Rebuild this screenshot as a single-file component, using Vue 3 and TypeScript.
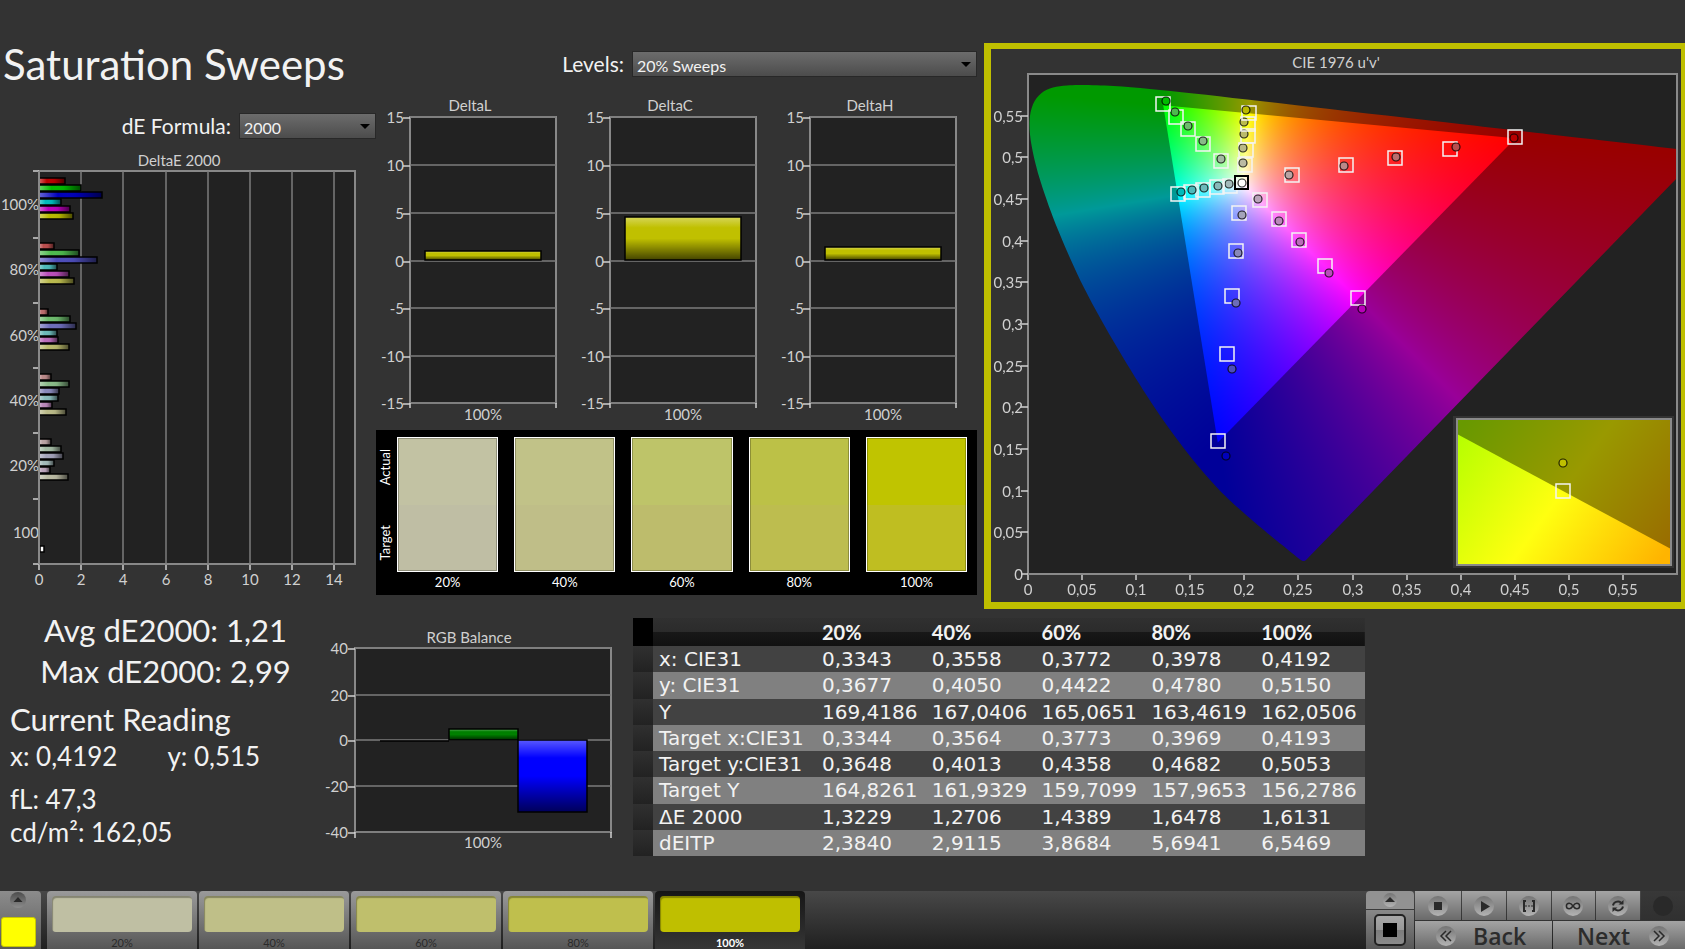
<script setup lang="ts">
import { onMounted, ref } from 'vue'

type Family = 'red' | 'green' | 'blue' | 'cyan' | 'magenta' | 'yellow'
type Point = [number, number]

const families: Family[] = ['red', 'green', 'blue', 'cyan', 'magenta', 'yellow']
const levels = ['20%', '40%', '60%', '80%', '100%']
const lowChannel = [163, 136, 108, 77, 0]

const channels: Record<Family, [number, number, number]> = {
  red: [1, 0, 0],
  green: [0, 1, 0],
  blue: [0, 0, 1],
  cyan: [0, 1, 1],
  magenta: [1, 0, 1],
  yellow: [1, 1, 0],
}

function tint(family: Family, level: number): string {
  const parts = channels[family].map((on) => (on ? 186 : lowChannel[level]))
  return `rgb(${parts.join(',')})`
}

/* DeltaE bars: right edge of each bar, per group, from 100% down to 20% */
const deGroups = [
  { label: '100%', level: 4, ends: [65, 81, 102, 61, 70, 73] },
  { label: '80%', level: 3, ends: [54, 79, 97, 57, 69, 74] },
  { label: '60%', level: 2, ends: [48, 70, 76, 57, 58, 69] },
  { label: '40%', level: 1, ends: [51, 69, 59, 58, 52, 66] },
  { label: '20%', level: 0, ends: [51, 61, 63, 54, 50, 68] },
]
const deTicksY = [171, 238, 303, 368, 433, 499, 564]
const deGrid = [0, 2, 4, 6, 8, 10, 12, 14].map((v) => ({ v, x: Math.round(39 + v * 21.1) }))

const deltaCharts = [
  { title: 'DeltaL', x: 410, barTop: 251 },
  { title: 'DeltaC', x: 610, barTop: 217 },
  { title: 'DeltaH', x: 810, barTop: 247 },
]
const deltaRows = [
  { v: 15, y: 117 },
  { v: 10, y: 165 },
  { v: 5, y: 213 },
  { v: 0, y: 261 },
  { v: -5, y: 308 },
  { v: -10, y: 356 },
  { v: -15, y: 403 },
]
const rgbRows = [
  { v: 40, y: 648 },
  { v: 20, y: 695 },
  { v: 0, y: 740 },
  { v: -20, y: 786 },
  { v: -40, y: 832 },
]

const swatches = [
  { label: '20%', actual: '#c2c2a3', target: '#bfbea4' },
  { label: '40%', actual: '#c1c288', target: '#bfbe88' },
  { label: '60%', actual: '#bec469', target: '#bdbc6c' },
  { label: '80%', actual: '#bcc147', target: '#bdbd4f' },
  { label: '100%', actual: '#c0c400', target: '#bfbe21' },
]
const tabs = [
  { label: '20%', color: '#bfbfa3' },
  { label: '40%', color: '#bfbf88' },
  { label: '60%', color: '#bfbf6c' },
  { label: '80%', color: '#bfbf4d' },
  { label: '100%', color: '#bfbf00' },
]
const activeTab = ref(4)
const formula = ref('2000')
const sweep = ref('20% Sweeps')

const rows: { name: string; values: string[] }[] = [
  { name: 'x: CIE31', values: ['0,3343', '0,3558', '0,3772', '0,3978', '0,4192'] },
  { name: 'y: CIE31', values: ['0,3677', '0,4050', '0,4422', '0,4780', '0,5150'] },
  { name: 'Y', values: ['169,4186', '167,0406', '165,0651', '163,4619', '162,0506'] },
  { name: 'Target x:CIE31', values: ['0,3344', '0,3564', '0,3773', '0,3969', '0,4193'] },
  { name: 'Target y:CIE31', values: ['0,3648', '0,4013', '0,4358', '0,4682', '0,5053'] },
  { name: 'Target Y', values: ['164,8261', '161,9329', '159,7099', '157,9653', '156,2786'] },
  { name: 'ΔE 2000', values: ['1,3229', '1,2706', '1,4389', '1,6478', '1,6131'] },
  { name: 'dEITP', values: ['2,3840', '2,9115', '3,8684', '5,6941', '6,5469'] },
]

/* Chromaticity diagram */
const plot = { x: 1028, y: 74, w: 649, h: 500 }
const unitX = plot.w / 0.6
const unitY = plot.h / 0.6
const axis = Array.from({ length: 12 }, (_, i) => {
  const v = i * 0.05
  return {
    label: String(Math.round(v * 100) / 100).replace('.', ','),
    x: Math.round(plot.x + v * unitX),
    y: Math.round(plot.y + plot.h - v * unitY),
  }
})

const targets: Record<Family, Point[]> = {
  red: [[1292, 175], [1346, 165], [1395, 158], [1450, 149], [1515, 137]],
  green: [[1221, 161], [1203, 144], [1188, 129], [1176, 117], [1163, 104]],
  blue: [[1239, 213], [1236, 251], [1232, 296], [1227, 354], [1218, 441]],
  cyan: [[1230, 186], [1217, 187], [1203, 190], [1191, 192], [1178, 194]],
  magenta: [[1260, 200], [1279, 219], [1299, 240], [1325, 266], [1358, 298]],
  yellow: [[1245, 165], [1246, 150], [1248, 136], [1248, 124], [1249, 113]],
}
const readings: Record<Family, Point[]> = {
  red: [[1289, 175], [1344, 166], [1396, 157], [1456, 147], [1514, 138]],
  green: [[1221, 159], [1203, 141], [1188, 126], [1175, 112], [1166, 101]],
  blue: [[1242, 215], [1238, 253], [1236, 303], [1232, 369], [1226, 456]],
  cyan: [[1229, 184], [1218, 186], [1204, 188], [1192, 190], [1181, 192]],
  magenta: [[1258, 199], [1279, 221], [1300, 242], [1329, 273], [1362, 309]],
  yellow: [[1243, 163], [1243, 148], [1244, 134], [1244, 122], [1246, 110]],
}

const locus: Point[] = [
  [0.1741, 0.005], [0.1714, 0.0051], [0.1644, 0.0109], [0.1566, 0.0177], [0.144, 0.0297],
  [0.1355, 0.0399], [0.1241, 0.0578], [0.1096, 0.0868], [0.0913, 0.1327], [0.0687, 0.2007],
  [0.0454, 0.295], [0.0235, 0.4127], [0.0082, 0.5384], [0.0039, 0.6548], [0.0139, 0.7502],
  [0.0389, 0.812], [0.0743, 0.8338], [0.1142, 0.8262], [0.1547, 0.8059], [0.2296, 0.7543],
  [0.3016, 0.6923], [0.3731, 0.6245], [0.4441, 0.5547], [0.5125, 0.4866], [0.5752, 0.4242],
  [0.627, 0.3725], [0.6658, 0.334], [0.6915, 0.3083], [0.719, 0.2809], [0.7347, 0.2653],
]
const primaries: Point[] = [[0.64, 0.33], [0.3, 0.6], [0.15, 0.06]]

function toPlot([x, y]: Point): Point {
  const d = -2 * x + 12 * y + 3
  return [((4 * x) / d) * unitX, plot.h - ((9 * y) / d) * unitY]
}

function colorAt(u: number, v: number): [number, number, number] {
  const d = 6 * u - 16 * v + 12
  const x = (9 * u) / d
  const y = Math.max((4 * v) / d, 0.0001)
  const X = x / y
  const Z = (1 - x - y) / y
  const lin = [
    3.2406 * X - 1.5372 - 0.4986 * Z,
    -0.9689 * X + 1.8758 + 0.0415 * Z,
    0.0557 * X - 0.204 + 1.057 * Z,
  ].map((c) => Math.max(c, 0))
  const top = Math.max(...lin, 0.0001)
  return lin.map((c) => (c / top) * 255) as [number, number, number]
}

function layer(scale: number): HTMLCanvasElement {
  const c = document.createElement('canvas')
  c.width = plot.w
  c.height = plot.h
  const ctx = c.getContext('2d')!
  const img = ctx.createImageData(plot.w, plot.h)
  for (let py = 0; py < plot.h; py++) {
    for (let px = 0; px < plot.w; px++) {
      const rgb = colorAt(px / unitX, (plot.h - py) / unitY)
      const i = (py * plot.w + px) * 4
      img.data[i] = rgb[0] * scale
      img.data[i + 1] = rgb[1] * scale
      img.data[i + 2] = rgb[2] * scale
      img.data[i + 3] = 255
    }
  }
  ctx.putImageData(img, 0, 0)
  return c
}

const diagram = ref<HTMLCanvasElement | null>(null)

onMounted(() => {
  const ctx = diagram.value?.getContext('2d')
  if (!ctx) return
  const pts = locus.map(toPlot)
  ctx.save()
  ctx.beginPath()
  ctx.moveTo(pts[0][0], pts[0][1])
  for (let i = 0; i < pts.length - 1; i++) {
    const p0 = pts[Math.max(i - 1, 0)]
    const p1 = pts[i]
    const p2 = pts[i + 1]
    const p3 = pts[Math.min(i + 2, pts.length - 1)]
    ctx.bezierCurveTo(
      p1[0] + (p2[0] - p0[0]) / 6, p1[1] + (p2[1] - p0[1]) / 6,
      p2[0] - (p3[0] - p1[0]) / 6, p2[1] - (p3[1] - p1[1]) / 6,
      p2[0], p2[1],
    )
  }
  ctx.closePath()
  ctx.clip()
  ctx.drawImage(layer(0.6), 0, 0)
  ctx.restore()
  ctx.save()
  ctx.beginPath()
  primaries.map(toPlot).forEach((p) => ctx.lineTo(p[0], p[1]))
  ctx.closePath()
  ctx.clip()
  ctx.drawImage(layer(1), 0, 0)
  ctx.restore()
})
</script>

<template>
  <div class="app">
    <main class="main">
      <section class="top">
        <div class="left">
          <h1>Saturation Sweeps</h1>
          <div class="field formula">
            <label for="formula">dE Formula:</label>
            <span class="picker">
              <select id="formula" v-model="formula">
                <option>2000</option>
              </select>
            </span>
          </div>
          <svg class="chart" viewBox="0 150 376 445" role="img" aria-label="DeltaE 2000">
            <defs>
              <linearGradient id="shadeH" x1="0" x2="1" y1="0" y2="0">
                <stop offset="0" stop-color="#fff" stop-opacity="0.4" />
                <stop offset="0.3" stop-color="#fff" stop-opacity="0" />
                <stop offset="0.6" stop-color="#000" stop-opacity="0.05" />
                <stop offset="1" stop-color="#000" stop-opacity="0.6" />
              </linearGradient>
            </defs>
            <text x="179" y="166" class="mid">DeltaE 2000</text>
            <rect x="39" y="171" width="316" height="393" class="plot" />
            <g v-for="g in deGrid" :key="g.v">
              <line :x1="g.x" :x2="g.x" y1="171" y2="564" class="grid" />
              <line :x1="g.x" :x2="g.x" y1="565" y2="570" class="tick" />
              <text :x="g.x" y="585" class="mid">{{ g.v }}</text>
            </g>
            <line v-for="y in deTicksY" :key="y" x1="33" x2="39" :y1="y" :y2="y" class="tick" />
            <g v-for="(g, gi) in deGroups" :key="g.label">
              <text x="39" :y="210 + Math.round(gi * 65.3)" class="end">{{ g.label }}</text>
              <g v-for="(e, i) in g.ends" :key="i">
                <rect x="39" :y="178 + Math.round(gi * 65.3) + i * 7" :width="e - 39" height="6"
                  :fill="tint(families[i], g.level)" />
                <rect x="39" :y="178 + Math.round(gi * 65.3) + i * 7" :width="e - 39" height="6"
                  fill="url(#shadeH)" class="outline" />
              </g>
            </g>
            <text x="39" y="538" class="end">100</text>
            <rect x="40" y="546" width="4" height="6" fill="#fff" class="outline" />
            <line x1="39" x2="39" y1="171" y2="564" class="frame" />
          </svg>
        </div>

        <div class="center">
          <div class="field levels">
            <label for="levels">Levels:</label>
            <span class="picker wide">
              <select id="levels" v-model="sweep">
                <option>20% Sweeps</option>
              </select>
            </span>
          </div>
          <svg class="chart" viewBox="376 90 608 340" role="img" aria-label="Delta L, C and H">
            <defs>
              <linearGradient id="shadeV" x1="0" x2="0" y1="0" y2="1">
                <stop offset="0" stop-color="#fff" stop-opacity="0.35" />
                <stop offset="0.25" stop-color="#fff" stop-opacity="0" />
                <stop offset="0.5" stop-color="#000" stop-opacity="0" />
                <stop offset="1" stop-color="#000" stop-opacity="0.65" />
              </linearGradient>
            </defs>
            <g v-for="c in deltaCharts" :key="c.title">
              <text :x="c.x + 60" y="111" class="mid">{{ c.title }}</text>
              <rect :x="c.x" y="117" width="146" height="286" class="plot" />
              <g v-for="r in deltaRows" :key="r.v">
                <line :x1="c.x" :x2="c.x + 146" :y1="r.y" :y2="r.y" class="grid" />
                <line :x1="c.x - 7" :x2="c.x" :y1="r.y + 1" :y2="r.y + 1" class="tick" />
                <text :x="c.x - 6" :y="r.y + 6" class="end">{{ r.v }}</text>
              </g>
              <line :x1="c.x" :x2="c.x" y1="403" y2="408" class="tick" />
              <line :x1="c.x + 146" :x2="c.x + 146" y1="403" y2="408" class="tick" />
              <rect :x="c.x + 15" :y="c.barTop" width="116" :height="260 - c.barTop" fill="#c0c000" />
              <rect :x="c.x + 15" :y="c.barTop" width="116" :height="260 - c.barTop"
                fill="url(#shadeV)" class="outline" />
              <text :x="c.x + 73" y="420" class="mid">100%</text>
            </g>
          </svg>
          <div class="compare">
            <div class="sides"><span>Actual</span><span>Target</span></div>
            <div v-for="s in swatches" :key="s.label" class="pair">
              <div class="tile">
                <div class="half" :style="{ background: s.actual }"></div>
                <div class="half" :style="{ background: s.target }"></div>
              </div>
              <span>{{ s.label }}</span>
            </div>
          </div>
        </div>

        <div class="cie">
          <svg class="chart" viewBox="991 49 690 553" role="img" aria-label="CIE 1976 chromaticity">
            <defs>
              <linearGradient id="bright" gradientUnits="userSpaceOnUse" x1="1466" y1="421" x2="1660" y2="561">
                <stop offset="0" stop-color="#b4ff00" />
                <stop offset="0.5" stop-color="#ffff10" />
                <stop offset="1" stop-color="#ffb400" />
              </linearGradient>
              <linearGradient id="dim" gradientUnits="userSpaceOnUse" x1="1466" y1="421" x2="1660" y2="561">
                <stop offset="0" stop-color="#689900" />
                <stop offset="0.5" stop-color="#999900" />
                <stop offset="1" stop-color="#996c00" />
              </linearGradient>
            </defs>
            <text x="1336" y="68" class="mid">CIE 1976 u'v'</text>
            <rect :x="plot.x" :y="plot.y" :width="plot.w" :height="plot.h" class="plot" />
            <foreignObject :x="plot.x" :y="plot.y" :width="plot.w" :height="plot.h">
              <canvas ref="diagram" :width="plot.w" :height="plot.h" class="diagram"></canvas>
            </foreignObject>
            <rect :x="plot.x" :y="plot.y" :width="plot.w" :height="plot.h" class="frame" />
            <g v-for="a in axis" :key="a.label">
              <line :x1="a.x" :x2="a.x" y1="575" y2="580" class="tick" />
              <text :x="a.x" y="595" class="mid">{{ a.label }}</text>
              <line x1="1021" x2="1028" :y1="a.y" :y2="a.y" class="tick" />
              <text x="1023" :y="a.y + 6" class="end">{{ a.label }}</text>
            </g>
            <g v-for="f in families" :key="f">
              <g v-for="(t, i) in targets[f]" :key="i">
                <rect :x="t[0] - 7" :y="t[1] - 7" width="14" height="14" class="target" />
                <circle :cx="readings[f][i][0]" :cy="readings[f][i][1]" r="4" :fill="tint(f, i)"
                  class="reading" />
              </g>
            </g>
            <rect x="1235" y="176" width="13" height="13" class="white-point" />
            <circle cx="1242" cy="183" r="4" fill="#fff" class="reading" />
            <rect x="1453" y="416" width="221" height="152" fill="#333" />
            <rect x="1457" y="419" width="214" height="146" fill="url(#dim)" />
            <polygon points="1457,434 1671,549 1671,565 1457,565" fill="url(#bright)" />
            <rect x="1457" y="419" width="214" height="146" class="frame" />
            <rect x="1556" y="484" width="14" height="14" class="target" />
            <circle cx="1563" cy="463" r="4" fill="#bfbf00" class="reading" />
          </svg>
        </div>
      </section>

      <section class="bottom">
        <div class="stats">
          <p class="big centered">Avg dE2000: 1,21</p>
          <p class="big centered">Max dE2000: 2,99</p>
          <h2 class="big">Current Reading</h2>
          <p class="xy"><span>x: 0,4192</span><span>y: 0,515</span></p>
          <p>fL: 47,3</p>
          <p>cd/m²: 162,05</p>
        </div>
        <svg class="chart balance" viewBox="325 625 308 235" role="img" aria-label="RGB Balance">
          <text x="469" y="643" class="mid">RGB Balance</text>
          <rect x="355" y="648" width="256" height="184" class="plot" />
          <g v-for="r in rgbRows" :key="r.v">
            <line x1="355" x2="611" :y1="r.y" :y2="r.y" class="grid" />
            <line x1="348" x2="355" :y1="r.y + 1" :y2="r.y + 1" class="tick" />
            <text x="348" :y="r.y + 6" class="end">{{ r.v }}</text>
          </g>
          <line x1="355" x2="355" y1="832" y2="838" class="tick" />
          <line x1="611" x2="611" y1="832" y2="838" class="tick" />
          <line x1="380" x2="449" y1="741" y2="741" class="outline" />
          <rect x="449" y="729" width="69" height="11" fill="#008000" />
          <rect x="449" y="729" width="69" height="11" fill="url(#shadeV)" class="outline" />
          <rect x="518" y="740" width="69" height="72" fill="#00f" />
          <rect x="518" y="740" width="69" height="72" fill="url(#shadeV)" class="outline" />
          <text x="483" y="848" class="mid">100%</text>
        </svg>
        <table>
          <colgroup>
            <col class="c-mark" />
            <col class="c-name" />
            <col v-for="l in levels" :key="l" />
          </colgroup>
          <thead>
            <tr>
              <td class="mark"></td>
              <td></td>
              <th v-for="l in levels" :key="l" scope="col">{{ l }}</th>
            </tr>
          </thead>
          <tbody>
            <tr v-for="r in rows" :key="r.name">
              <td class="mark"></td>
              <th scope="row">{{ r.name }}</th>
              <td v-for="(v, i) in r.values" :key="i">{{ v }}</td>
            </tr>
          </tbody>
        </table>
      </section>
    </main>

    <footer class="bar">
      <svg class="defs" width="0" height="0" aria-hidden="true">
        <defs>
          <linearGradient id="knob" x1="0" x2="0" y1="0" y2="1">
            <stop offset="0" stop-color="#747474" />
            <stop offset="1" stop-color="#b4b4b4" />
          </linearGradient>
          <linearGradient id="knobDark" x1="0" x2="0" y1="0" y2="1">
            <stop offset="0" stop-color="#4c4c4c" />
            <stop offset="1" stop-color="#8c8c8c" />
          </linearGradient>
        </defs>
      </svg>
      <button class="current" type="button" aria-label="Show current patch">
        <svg width="16" height="16" viewBox="0 0 16 16">
          <circle cx="8" cy="8" r="8" fill="url(#knobDark)" />
          <path d="M3.500 10 8 5 12.500 10z" class="ink" />
        </svg>
        <span class="chip"></span>
      </button>
      <nav class="tabs">
        <button v-for="(t, i) in tabs" :key="t.label" type="button" class="tab"
          :class="{ active: i === activeTab }" @click="activeTab = i">
          <span class="patch" :style="{ background: t.color }"></span>
          <span>{{ t.label }}</span>
        </button>
      </nav>
      <div class="stopper">
        <button type="button" class="up" aria-label="Expand">
          <svg width="16" height="16" viewBox="0 0 16 16">
            <circle cx="8" cy="8" r="7" fill="url(#knob)" />
            <path d="M3 10 8 5 13 10z" class="ink" />
          </svg>
        </button>
        <button type="button" class="halt" aria-label="Stop pattern">
          <svg width="32" height="32" viewBox="0 0 32 32">
            <defs>
              <linearGradient id="halt" x1="0" x2="0" y1="0" y2="1">
                <stop offset="0" stop-color="#a8a8a8" />
                <stop offset="0.5" stop-color="#989898" />
                <stop offset="0.5" stop-color="#7c7c7c" />
                <stop offset="1" stop-color="#8c8c8c" />
              </linearGradient>
            </defs>
            <rect x="1" y="1" width="30" height="30" rx="4" fill="url(#halt)" stroke="#222" stroke-width="2" />
            <rect x="9" y="9" width="14" height="14" fill="#000" />
          </svg>
        </button>
      </div>
      <div class="transport">
        <div class="keys">
          <button type="button" aria-label="Stop">
            <svg width="22" height="22" viewBox="0 0 22 22">
              <circle cx="11" cy="11" r="10" fill="url(#knob)" />
              <rect x="7" y="7" width="8" height="8" class="ink" />
            </svg>
          </button>
          <button type="button" aria-label="Play">
            <svg width="22" height="22" viewBox="0 0 22 22">
              <circle cx="11" cy="11" r="10" fill="url(#knob)" />
              <path d="M8 6 17 11.500 8 17z" class="ink" />
            </svg>
          </button>
          <button type="button" aria-label="Range">
            <svg width="22" height="22" viewBox="0 0 22 22">
              <circle cx="11" cy="11" r="10" fill="url(#knob)" />
              <path d="M8 6H6V16H8M14 6H16V16H14" class="line thick" />
              <path d="M7.500 11H14.500" class="line dots" />
            </svg>
          </button>
          <button type="button" aria-label="Loop">
            <svg width="22" height="22" viewBox="0 0 22 22">
              <circle cx="11" cy="11" r="10" fill="url(#knob)" />
              <path
                d="M11 11C9.500 8.800 8.500 8.200 7.200 8.200A2.800 2.800 0 0 0 7.200 13.800C8.500 13.800 9.500 13.200 11 11C12.500 8.800 13.500 8.200 14.800 8.200A2.800 2.800 0 0 1 14.800 13.800C13.500 13.800 12.500 13.200 11 11z"
                class="line" />
            </svg>
          </button>
          <button type="button" aria-label="Refresh">
            <svg width="22" height="22" viewBox="0 0 22 22">
              <circle cx="11" cy="11" r="10" fill="url(#knob)" />
              <path d="M6 10.500A5 4.500 0 0 1 14 7.500M16 11.500A5 4.500 0 0 1 8 14.500" class="line thick" />
              <path d="M16.500 5V9.500H11.500zM5.500 17V12.500H10.500z" class="ink" />
            </svg>
          </button>
          <button type="button" class="off" aria-label="Record">
            <svg width="22" height="22" viewBox="0 0 22 22">
              <circle cx="11" cy="11" r="10" fill="#292929" />
            </svg>
          </button>
        </div>
        <div class="steps">
          <button type="button" class="back">
            <svg width="22" height="22" viewBox="0 0 22 22">
              <circle cx="11" cy="11" r="10" fill="url(#knob)" />
              <path d="M11 6 6 11 11 16M16 6 11 11 16 16" class="line" />
            </svg>
            <span>Back</span>
          </button>
          <button type="button" class="next">
            <span>Next</span>
            <svg width="22" height="22" viewBox="0 0 22 22">
              <circle cx="11" cy="11" r="10" fill="url(#knob)" />
              <path d="M6 6 11 11 6 16M11 6 16 11 11 16" class="line" />
            </svg>
          </button>
        </div>
      </div>
    </footer>
  </div>
</template>

<style>
body {
  background: #333;
}
</style>

<style scoped>
* {
  box-sizing: border-box;
}

.app {
  display: flex;
  flex-direction: column;
  min-height: 100vh;
  background: #333;
  color: #f2f2f2;
  font-family: Lato, "Liberation Sans", sans-serif;
}

h1,
h2,
p {
  margin: 0;
  font-weight: 400;
}

button {
  border: 0;
  padding: 0;
  font-family: inherit;
}

svg {
  display: block;
}

.main {
  flex: 1;
  padding-top: 43px;
}

.top {
  display: grid;
  grid-template-columns: 376fr 608fr 701fr;
}

h1 {
  padding-left: 3px;
  font-size: 42px;
  line-height: 42px;
}

.field {
  display: flex;
  justify-content: flex-end;
  align-items: center;
  gap: 8px;
  height: 26px;
  font-size: 21px;
  line-height: 24px;
}

.formula {
  margin-top: 28px;
  margin-bottom: 11px;
}

.levels {
  margin-top: 8px;
  margin-bottom: 13px;
  padding-right: 7px;
}

.picker {
  position: relative;
  width: 137px;
  height: 26px;
}

.picker.wide {
  width: 345px;
}

.picker::after {
  content: "";
  position: absolute;
  right: 6px;
  top: 11px;
  border: 5px solid transparent;
  border-top-color: #000;
  border-bottom: 0;
  pointer-events: none;
}

select {
  display: block;
  width: 100%;
  height: 100%;
  padding: 2px 4px 0;
  appearance: none;
  border: 1px solid #282828;
  border-radius: 0;
  background: linear-gradient(#6c6c6c, #4c4c4c);
  color: #f2f2f2;
  font-family: inherit;
  font-size: 16px;
}

.chart {
  width: 100%;
  height: auto;
}

.chart text {
  fill: #d0d0d0;
  font-size: 15px;
}

.mid {
  text-anchor: middle;
}

.end {
  text-anchor: end;
}

.plot {
  fill: #222;
  stroke: #888;
  stroke-width: 2;
}

.frame {
  fill: none;
  stroke: #8a8a8a;
  stroke-width: 2;
}

.grid {
  stroke: #7c7c7c;
  stroke-width: 1.5;
}

.tick {
  stroke: #d0d0d0;
  stroke-width: 1.5;
}

.outline {
  stroke: #000;
  stroke-width: 1.5;
}

.target {
  fill: none;
  stroke: #f4f4f4;
  stroke-width: 1.5;
}

.reading {
  stroke: #000;
  stroke-opacity: 0.8;
  stroke-width: 1.2;
}

.white-point {
  fill: none;
  stroke: #000;
  stroke-width: 2;
}

.diagram {
  display: block;
}

.compare {
  display: flex;
  gap: 16px;
  margin-right: 7px;
  padding: 7px 10px 2px 0;
  background: #000;
  font-size: 13px;
  color: #fff;
}

.sides {
  display: flex;
  flex-direction: column;
  justify-content: space-between;
  width: 21px;
  height: 135px;
  margin-right: -16px;
  padding: 12px 0;
}

.sides span {
  align-self: flex-start;
  writing-mode: vertical-rl;
  transform: rotate(180deg);
  text-align: center;
  line-height: 18px;
}

.pair {
  flex: 1;
  text-align: center;
  line-height: 21px;
}

.tile {
  height: 135px;
  border: 1px solid #fff;
}

.half {
  height: 50%;
  border: 1px solid rgb(0 0 0 / 25%);
  border-bottom: 0;
}

.half + .half {
  border-top: 0;
  border-bottom: 1px solid rgb(0 0 0 / 25%);
}

.cie {
  border: solid #bfbf00;
  border-width: 6px 4px 7px 7px;
}

.bottom {
  display: grid;
  grid-template-columns: 325fr 308fr 732fr 320fr;
  align-items: start;
}

.stats {
  padding-top: 1px;
  font-size: 26px;
  line-height: 33px;
}

.stats p,
.stats h2 {
  padding-left: 10px;
}

.stats .big {
  font-size: 31px;
  line-height: 41px;
}

.stats .centered {
  padding-left: 6px;
  text-align: center;
}

.stats h2 {
  margin-top: 7px;
}

.stats .xy {
  display: flex;
  gap: 50px;
  margin-bottom: 10px;
}

.balance {
  margin-top: 16px;
}

table {
  width: 100%;
  height: 238px;
  margin-top: 9px;
  border-collapse: collapse;
  table-layout: fixed;
  font-family: "DejaVu Sans", "Noto Sans", sans-serif;
  font-size: 20px;
  line-height: 26px;
  text-align: left;
  white-space: nowrap;
}

.c-mark {
  width: 20px;
}

.c-name {
  width: 163px;
}

td,
th {
  padding: 0 0 0 6px;
  font-weight: 400;
}

thead tr {
  height: 28px;
  background: linear-gradient(#303030, #2b2b2b 50%, #181818 50%, #111);
}

thead th {
  font-family: Lato, sans-serif;
  font-size: 20px;
  font-weight: 700;
}

thead .mark {
  background: #000;
}

tbody tr {
  height: 26px;
  background: #424242;
}

tbody tr:nth-child(even) {
  background: #808080;
}

tbody .mark {
  background: linear-gradient(#303030, #222);
}

.bar {
  display: flex;
  height: 58px;
  background: linear-gradient(#484848, #202020);
}

.defs {
  position: absolute;
}

.current {
  display: flex;
  flex-direction: column;
  justify-content: space-between;
  width: 41px;
  padding: 1px 4px 2px 1px;
  border-radius: 0 4px 0 0;
  background: linear-gradient(#8c8c8c, #5a5a5a);
}

.current svg {
  margin-left: 9px;
}

.chip {
  width: 35px;
  height: 30px;
  border-radius: 3px;
  border: 1px solid #c8c800;
  background: #ff0;
}

.tabs {
  display: flex;
  gap: 2px;
  flex: 1;
  padding-left: 6px;
}

.tab {
  display: flex;
  flex-direction: column;
  align-items: center;
  justify-content: space-between;
  width: 150px;
  padding: 5px 5px 0;
  border-radius: 4px 4px 0 0;
  background: linear-gradient(#9a9a9a, #565656);
  color: #2a2a2a;
  font-size: 11px;
  line-height: 12px;
}

.tab.active {
  background: linear-gradient(#161616, #363636);
  color: #fff;
  font-weight: 700;
}

.patch {
  width: 100%;
  height: 36px;
  border-radius: 4px;
  box-shadow: inset 1px 2px 1px rgb(0 0 0 / 30%);
}

.stopper {
  display: flex;
  flex-direction: column;
  gap: 1px;
  width: 48px;
}

.stopper button {
  display: flex;
  justify-content: center;
  align-items: center;
}

.up {
  height: 18px;
  border-radius: 4px 4px 0 0;
  background: #929292;
}

.halt {
  flex: 1;
  background: linear-gradient(#888, #585858);
}

.transport {
  display: flex;
  flex-direction: column;
  gap: 1px;
  width: 270px;
  margin-left: 1px;
}

.keys,
.steps {
  display: flex;
  gap: 1px;
}

.keys {
  height: 30px;
}

.steps {
  flex: 1;
}

.keys button,
.steps button {
  display: flex;
  flex: 1;
  justify-content: center;
  align-items: center;
  background: linear-gradient(#a4a4a4, #6a6a6a);
}

.keys button:first-child {
  flex: 0 0 46px;
}

.keys .off {
  background: linear-gradient(#383838, #303030);
}

.steps button {
  overflow: hidden;
  padding-top: 2px;
  color: #2c2c2c;
  font-family: "Open Sans", sans-serif;
  font-size: 23px;
  font-weight: 600;
  line-height: 26px;
}

.steps .back {
  gap: 16px;
  justify-content: flex-start;
  padding-left: 20px;
}

.steps .next {
  gap: 18px;
  justify-content: flex-end;
  padding-right: 15px;
}

.ink {
  fill: #2a2a2a;
}

.line {
  fill: none;
  stroke: #2a2a2a;
  stroke-width: 1.5;
}

.thick {
  stroke-width: 2;
}

.dots {
  stroke-width: 2;
  stroke-dasharray: 1 2;
}
</style>
